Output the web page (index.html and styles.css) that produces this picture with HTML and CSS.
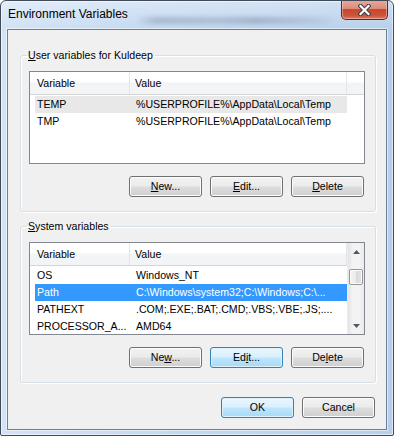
FILE: index.html
```
<!DOCTYPE html>
<html>
<head>
<meta charset="utf-8">
<title>Environment Variables</title>
<link rel="stylesheet" href="styles.css">
</head>
<body>
<div class="window">
  <div class="titlebar">
    <div class="title">Environment Variables</div>
    <div class="close-btn">
      <svg class="close-x" width="13" height="12" viewBox="0 0 13 12">
        <path d="M2.5 2 L10.5 10 M10.5 2 L2.5 10" stroke="#3a3f48" stroke-width="4.2" stroke-linecap="square" fill="none"/>
        <path d="M2.5 2 L10.5 10 M10.5 2 L2.5 10" stroke="#ffffff" stroke-width="2.2" stroke-linecap="square" fill="none"/>
      </svg>
    </div>
  </div>
  <div class="client">
    <fieldset class="group group-user">
      <legend class="group-label"><u>U</u>ser variables for Kuldeep</legend>
      <div class="list">
        <div class="list-body">
          <div class="list-header">
            <div class="hcol hcol-var">Variable</div>
            <div class="hcol hcol-val">Value</div>
            <div class="hcol hcol-fill"></div>
          </div>
          <div class="list-rows">
            <div class="row row-inactive"><span class="cell cell-var">TEMP</span><span class="cell cell-val">%USERPROFILE%\AppData\Local\Temp</span></div>
            <div class="row"><span class="cell cell-var">TMP</span><span class="cell cell-val">%USERPROFILE%\AppData\Local\Temp</span></div>
          </div>
        </div>
      </div>
      <div class="btn-row">
        <button class="btn"><u>N</u>ew...</button>
        <button class="btn"><u>E</u>dit...</button>
        <button class="btn"><u>D</u>elete</button>
      </div>
    </fieldset>

    <fieldset class="group group-system">
      <legend class="group-label"><u>S</u>ystem variables</legend>
      <div class="list">
        <div class="list-body">
          <div class="list-header">
            <div class="hcol hcol-var">Variable</div>
            <div class="hcol hcol-val">Value</div>
          </div>
          <div class="list-rows">
            <div class="row"><span class="cell cell-var">OS</span><span class="cell cell-val">Windows_NT</span></div>
            <div class="row row-selected"><span class="cell cell-var">Path</span><span class="cell cell-val">C:\Windows\system32;C:\Windows;C:\...</span></div>
            <div class="row"><span class="cell cell-var">PATHEXT</span><span class="cell cell-val">.COM;.EXE;.BAT;.CMD;.VBS;.VBE;.JS;....</span></div>
            <div class="row"><span class="cell cell-var">PROCESSOR_A...</span><span class="cell cell-val">AMD64</span></div>
          </div>
        </div>
        <div class="scrollbar">
          <div class="sb-btn"><svg width="7" height="4" viewBox="0 0 7 4"><polygon points="3.5,0 7,4 0,4" fill="#505a66"/></svg></div>
          <div class="sb-track"><div class="sb-thumb"></div></div>
          <div class="sb-btn"><svg width="7" height="4" viewBox="0 0 7 4"><polygon points="0,0 7,0 3.5,4" fill="#505a66"/></svg></div>
        </div>
      </div>
      <div class="btn-row">
        <button class="btn">Ne<u>w</u>...</button>
        <button class="btn btn-hot">Ed<u>i</u>t...</button>
        <button class="btn">De<u>l</u>ete</button>
      </div>
    </fieldset>

    <div class="dialog-buttons">
      <button class="btn btn-hot">OK</button>
      <button class="btn">Cancel</button>
    </div>
  </div>
</div>
</body>
</html>
```

FILE: styles.css
```
* { box-sizing: border-box; }

html, body {
  margin: 0;
  padding: 0;
  width: 394px;
  height: 436px;
  overflow: hidden;
  background: #ffffff;
}

body {
  font-family: "Liberation Sans", Arial, sans-serif;
  font-size: 10.6px;
  color: #000;
}

.window {
  width: 394px;
  height: 436px;
  border: 1px solid #404a58;
  border-radius: 6px 6px 2px 2px;
  background:
    linear-gradient(180deg, rgba(255,255,255,0.35) 0, rgba(255,255,255,0) 28px),
    linear-gradient(90deg, #d3e3f5 0, #c6daf1 35%, #bfd5ee 70%, #b7cfeb 100%);
  box-shadow: inset 0 0 0 1px rgba(255,255,255,0.55);
  display: flex;
  flex-direction: column;
  overflow: hidden;
}

.titlebar {
  height: 28px;
  flex: none;
  display: flex;
  justify-content: space-between;
  align-items: flex-start;
  position: relative;
}

.titlebar::before {
  content: "";
  position: absolute;
  left: 135px;
  top: 16px;
  width: 200px;
  height: 7px;
  background: linear-gradient(90deg, rgba(80,95,120,0.0) 0, rgba(80,95,120,0.28) 10%, rgba(80,95,120,0.22) 40%, rgba(80,95,120,0.3) 60%, rgba(80,95,120,0.12) 90%, rgba(80,95,120,0) 100%);
  filter: blur(2px);
}

.title {
  position: relative;
  padding: 5px 0 0 7px;
  font-size: 12px;
  line-height: 16px;
  color: #000;
}

.close-btn {
  position: relative;
  width: 47px;
  height: 20px;
  margin: -1px 5px 0 0;
  border: 1px solid #5a2a22;
  border-top: none;
  border-radius: 0 0 5px 5px;
  background: linear-gradient(180deg, #e8aa9c 0, #dd8c7a 45%, #c8492f 50%, #cb5238 80%, #e07a5e 100%);
  box-shadow: inset 0 0 0 1px rgba(255,220,210,0.45);
  display: flex;
  align-items: center;
  justify-content: center;
}

.close-x { margin-top: 0; }

.client {
  flex: none;
  height: 401px;
  margin: 0 6px;
  border: 1px solid #6d7f95;
  box-shadow: 0 0 0 1px rgba(255,255,255,0.5);
  background: #f0f0f0;
  padding: 0 10px 0 12px;
  display: flex;
  flex-direction: column;
}

.group {
  margin: 0;
  padding: 9px 10px 14px 8px;
  border: 1px solid #d5dfe5;
  border-radius: 3px;
  box-shadow: inset 1px 1px 0 #ffffff, 1px 1px 0 #ffffff;
  min-width: 0;
}

.group-user { margin-top: 19px; }
.group-system { margin-top: 8px; }

.group-label {
  padding: 0 2px 0 1px;
  margin-left: -2px;
  line-height: 13px;
}

.list {
  height: 93px;
  border: 1px solid #828790;
  background: #fff;
  display: flex;
  overflow: hidden;
}

.list-body {
  flex: 1;
  min-width: 0;
  overflow: hidden;
}

.list-header {
  display: flex;
  height: 23px;
  border-bottom: 1px solid #d5d5d5;
  background: linear-gradient(180deg, #ffffff 0, #ffffff 45%, #f3f4f6 50%, #f3f4f6 100%);
}

.hcol {
  height: 22px;
  line-height: 22px;
  white-space: nowrap;
}

.hcol-var {
  width: 100px;
  padding-left: 7px;
  border-right: 1px solid #e3e6ea;
}

.hcol-val {
  width: 217px;
  padding-left: 5px;
  border-right: 1px solid #e3e6ea;
}

.hcol-fill { flex: 1; }

.list-rows {
  padding-top: 1px;
}

.row {
  display: flex;
  height: 17px;
  margin-left: 5px;
  width: 312px;
  line-height: 17px;
  white-space: nowrap;
}

.row-inactive { background: #e8e8e8; }
.row-selected { background: #3399ff; color: #fff; }

.cell { overflow: hidden; display: block; }
.cell-var { width: 95px; padding-left: 2px; }
.cell-val { width: 217px; padding-left: 6px; }

.scrollbar {
  width: 17px;
  flex: none;
  display: flex;
  flex-direction: column;
  background: linear-gradient(90deg, #e4e4e4 0, #f3f3f3 30%, #f3f3f3 70%, #ebebeb 100%);
  border-left: 1px solid #ececec;
}

.sb-btn {
  height: 17px;
  flex: none;
  display: flex;
  align-items: center;
  justify-content: center;
}

.sb-track {
  flex: 1;
  padding: 9px 1px 0 1px;
}

.sb-thumb {
  height: 16px;
  border: 1px solid #979797;
  border-radius: 2px;
  background: linear-gradient(90deg, #f5f5f5 0, #eaeaea 50%, #dadada 51%, #e2e2e2 100%);
  box-shadow: inset 0 0 0 1px #fbfbfb;
}

.btn-row {
  display: flex;
  justify-content: flex-end;
  gap: 8px;
  margin-top: 12px;
  padding-right: 1px;
}

.btn {
  width: 73px;
  height: 21px;
  padding: 0;
  margin: 0;
  font: inherit;
  color: #000;
  border: 1px solid #707070;
  border-radius: 3px;
  background: linear-gradient(180deg, #f2f2f2 0, #ebebeb 48%, #dddddd 52%, #cfcfcf 100%);
  box-shadow: inset 0 0 0 1px #fcfcfc;
  line-height: 19px;
  text-align: center;
}

.btn-hot {
  border-color: #3c7fb1;
  background: linear-gradient(180deg, #eaf6fd 0, #d9f0fc 48%, #bee6fd 52%, #a7d9f5 100%);
  box-shadow: inset 0 0 0 1px #dff2fc;
}

.dialog-buttons {
  display: flex;
  justify-content: flex-end;
  gap: 8px;
  margin-top: 14px;
  padding-right: 1px;
}
```
